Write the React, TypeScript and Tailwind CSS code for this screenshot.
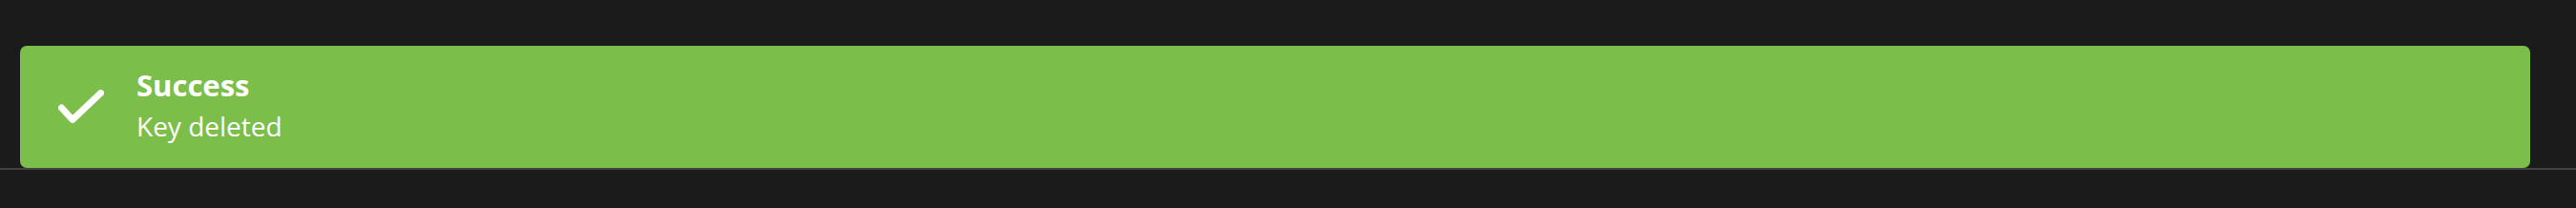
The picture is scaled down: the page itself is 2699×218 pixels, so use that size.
export default function App() {
  return (
    <div className="h-[218px] w-full bg-[#1b1b1b]" style={{ fontFamily: '"Open Sans", "Noto Sans", sans-serif' }}>
      <div className="pt-[48px] pl-[21px] pr-[48px]">
        <div className="flex h-[128px] items-center rounded-[7px] bg-[#7bbe49] pl-[40px] text-white">
          <svg width="48" height="36" viewBox="0 0 48 36" className="shrink-0">
            <polyline
              points="3.5,19 15,31.5 44.5,3.5"
              fill="none"
              stroke="white"
              strokeWidth="7"
              strokeLinecap="round"
              strokeLinejoin="round"
            />
          </svg>
          <div className="ml-[34px] flex flex-col pb-[3px]">
            <span className="text-[31px] font-bold leading-[38px]">Success</span>
            <span className="mt-[5px] text-[28px] leading-[38px]">Key deleted</span>
          </div>
        </div>
      </div>
      <div className="h-[2px] w-full bg-[#424242]" />
    </div>
  );
}
